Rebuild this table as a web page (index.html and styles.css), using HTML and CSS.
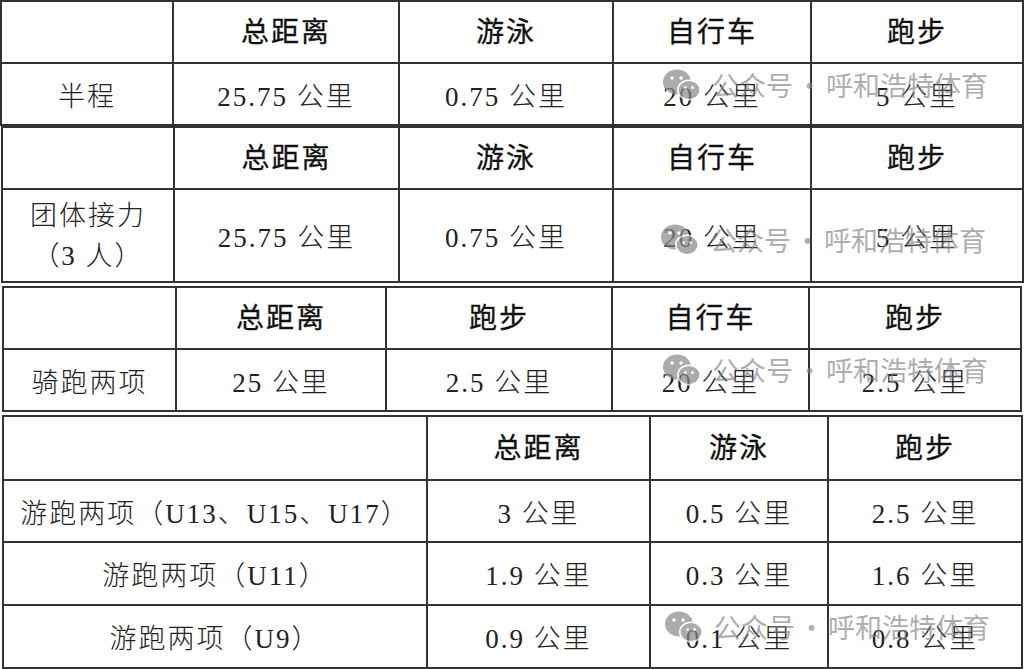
FILE: index.html
```html
<!DOCTYPE html>
<html lang="zh">
<head>
<meta charset="utf-8">
<title>赛事距离</title>
<link rel="stylesheet" href="styles.css">
</head>
<body>
<div class="page">
  <div class="grid t1">
    <div class="c"></div><div class="c h">总距离</div><div class="c h">游泳</div><div class="c h">自行车</div><div class="c h">跑步</div>
    <div class="c d">半程</div><div class="c d">25.75 公里</div><div class="c d">0.75 公里</div><div class="c d">20 公里</div><div class="c d">5 公里</div>
  </div>
  <div class="grid t2">
    <div class="c"></div><div class="c h">总距离</div><div class="c h">游泳</div><div class="c h">自行车</div><div class="c h">跑步</div>
    <div class="c d two">团体接力<br>（3 人）</div><div class="c d">25.75 公里</div><div class="c d">0.75 公里</div><div class="c d">20 公里</div><div class="c d">5 公里</div>
  </div>
  <div class="grid t3">
    <div class="c"></div><div class="c h">总距离</div><div class="c h">跑步</div><div class="c h">自行车</div><div class="c h">跑步</div>
    <div class="c d">骑跑两项</div><div class="c d">25 公里</div><div class="c d">2.5 公里</div><div class="c d">20 公里</div><div class="c d">2.5 公里</div>
  </div>
  <div class="grid t4">
    <div class="c"></div><div class="c h">总距离</div><div class="c h">游泳</div><div class="c h">跑步</div>
    <div class="c d">游跑两项（U13、U15、U17）</div><div class="c d">3 公里</div><div class="c d">0.5 公里</div><div class="c d">2.5 公里</div>
    <div class="c d">游跑两项（U11）</div><div class="c d">1.9 公里</div><div class="c d">0.3 公里</div><div class="c d">1.6 公里</div>
    <div class="c d">游跑两项（U9）</div><div class="c d">0.9 公里</div><div class="c d">0.1 公里</div><div class="c d">0.8 公里</div>
  </div>

  <div class="wm wm1"><svg class="logo" viewBox="0 0 40 34" width="40" height="34"><ellipse cx="15" cy="14" rx="14" ry="12.5" fill="#8c8c8c"/><circle cx="10" cy="10" r="1.8" fill="#fff"/><circle cx="19" cy="10" r="1.8" fill="#fff"/><ellipse cx="27" cy="22" rx="12" ry="10.5" fill="#fff"/><ellipse cx="27" cy="22" rx="10.5" ry="9" fill="#8c8c8c"/><circle cx="23.5" cy="19.5" r="1.5" fill="#fff"/><circle cx="30.5" cy="19.5" r="1.5" fill="#fff"/></svg><span>公众号<span class="dot">·</span>呼和浩特体育</span></div>
  <div class="wm wm2"><svg class="logo" viewBox="0 0 40 34" width="40" height="34"><ellipse cx="15" cy="14" rx="14" ry="12.5" fill="#8c8c8c"/><circle cx="10" cy="10" r="1.8" fill="#fff"/><circle cx="19" cy="10" r="1.8" fill="#fff"/><ellipse cx="27" cy="22" rx="12" ry="10.5" fill="#fff"/><ellipse cx="27" cy="22" rx="10.5" ry="9" fill="#8c8c8c"/><circle cx="23.5" cy="19.5" r="1.5" fill="#fff"/><circle cx="30.5" cy="19.5" r="1.5" fill="#fff"/></svg><span>公众号<span class="dot">·</span>呼和浩特体育</span></div>
  <div class="wm wm3"><svg class="logo" viewBox="0 0 40 34" width="40" height="34"><ellipse cx="15" cy="14" rx="14" ry="12.5" fill="#8c8c8c"/><circle cx="10" cy="10" r="1.8" fill="#fff"/><circle cx="19" cy="10" r="1.8" fill="#fff"/><ellipse cx="27" cy="22" rx="12" ry="10.5" fill="#fff"/><ellipse cx="27" cy="22" rx="10.5" ry="9" fill="#8c8c8c"/><circle cx="23.5" cy="19.5" r="1.5" fill="#fff"/><circle cx="30.5" cy="19.5" r="1.5" fill="#fff"/></svg><span>公众号<span class="dot">·</span>呼和浩特体育</span></div>
  <div class="wm wm4"><svg class="logo" viewBox="0 0 40 34" width="40" height="34"><ellipse cx="15" cy="14" rx="14" ry="12.5" fill="#8c8c8c"/><circle cx="10" cy="10" r="1.8" fill="#fff"/><circle cx="19" cy="10" r="1.8" fill="#fff"/><ellipse cx="27" cy="22" rx="12" ry="10.5" fill="#fff"/><ellipse cx="27" cy="22" rx="10.5" ry="9" fill="#8c8c8c"/><circle cx="23.5" cy="19.5" r="1.5" fill="#fff"/><circle cx="30.5" cy="19.5" r="1.5" fill="#fff"/></svg><span>公众号<span class="dot">·</span>呼和浩特体育</span></div>
</div>
</body>
</html>
```
FILE: styles.css
```css
html, body {
  margin: 0;
  padding: 0;
  background: #ffffff;
}
.page {
  position: relative;
  width: 1024px;
  height: 669px;
  overflow: hidden;
}
.grid {
  display: grid;
  box-sizing: border-box;
  border-top: 2px solid #333;
  border-left: 2px solid #333;
  width: max-content;
}
.c {
  box-sizing: border-box;
  border-right: 2px solid #333;
  border-bottom: 2px solid #333;
  display: flex;
  align-items: center;
  justify-content: center;
  text-align: center;
  white-space: nowrap;
}
.h {
  font-family: "Noto Sans CJK SC", sans-serif;
  font-size: 28px;
  font-weight: 400;
  color: #111;
  letter-spacing: 2px;
  -webkit-text-stroke: 0.3px #111;
  padding-bottom: 4px;
}
.d {
  font-family: "Liberation Serif", "Noto Sans CJK SC", serif;
  font-size: 27px;
  font-weight: 300;
  color: #222;
  letter-spacing: 2px;
}
.two {
  line-height: 40px;
}
.t1 {
  margin-left: 0;
  grid-template-columns: 172px 226px 214px 198px 212px;
  grid-template-rows: 62px 62px;
}
.t2 {
  margin-left: 1px;
  grid-template-columns: 172px 225px 214px 198px 212px;
  grid-template-rows: 62px 93px;
}
.t3 {
  margin-left: 2px;
  margin-top: 3px;
  grid-template-columns: 173px 210px 226px 197px 212px;
  grid-template-rows: 62px 62px;
}
.t4 {
  margin-left: 2px;
  margin-top: 3px;
  grid-template-columns: 424px 223px 178px 194px;
  grid-template-rows: 64px 62px 63px 63px;
}
.wm {
  position: absolute;
  display: flex;
  align-items: center;
  gap: 10px;
  font-family: "Noto Sans CJK SC", sans-serif;
  font-size: 27px;
  line-height: 34px;
  color: rgba(130, 130, 130, 0.72);
  white-space: nowrap;
  opacity: 0.9;
}
.dot {
  margin: 0 3px;
}
.logo {
  opacity: 0.8;
}
.wm1 { left: 662px; top: 68px; }
.wm2 { left: 660px; top: 223px; }
.wm3 { left: 662px; top: 353px; }
.wm4 { left: 664px; top: 610px; }
```
